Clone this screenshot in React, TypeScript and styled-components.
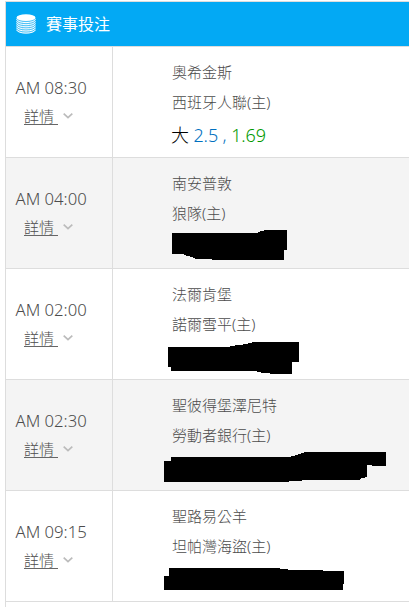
import React from "react";
import styled, { createGlobalStyle } from "styled-components";

const GlobalStyle = createGlobalStyle`
  * { box-sizing: border-box; }
  body {
    margin: 0;
    background: #fff;
    color: #4c4c4c;
    font-family: "Noto Sans", "Noto Sans CJK TC", sans-serif;
    overflow: hidden;
  }
`;

const Panel = styled.main`
  height: 607px;
  margin-left: 5px;
  padding-top: 1px;
  display: flex;
  flex-direction: column;
`;

const Table = styled.section`
  flex: 1;
  border-left: 1px solid #ddd;
  border-top: 1px solid #ddd;
`;

const Header = styled.header`
  height: 45px;
  display: flex;
  align-items: center;
  gap: 10px;
  padding-left: 10px;
  background: #03a9f4;
  border-bottom: 1px solid #ddd;
`;

const Title = styled.h1`
  margin: 0;
  color: #fff;
  font-size: 16px;
  line-height: 24px;
  font-weight: 400;
`;

const Row = styled.article<{ $shaded: boolean }>`
  height: 111px;
  display: grid;
  grid-template-columns: 107px 1fr;
  background: ${(p) => (p.$shaded ? "#f4f4f4" : "#fff")};
  border-bottom: 1px solid #ddd;
`;

const TimeCell = styled.div`
  border-right: 1px solid #ddd;
  padding: 27px 0 0 9.5px;
`;

const Time = styled.div`
  font-size: 16.7px;
  line-height: 28px;
  font-weight: 300;
  white-space: nowrap;
`;

const Details = styled.div`
  display: flex;
  align-items: center;
  gap: 5px;
  height: 28px;
  padding-left: 8.5px;
`;

const DetailsLink = styled.a`
  width: 34px;
  height: 18px;
  font-size: 15px;
  line-height: 18px;
  font-weight: 300;
  border-bottom: 1px solid #666;
`;

const MatchCell = styled.div`
  padding: 10px 0 0 59px;
  overflow: hidden;
`;

const Team = styled.div`
  font-size: 15px;
  line-height: 30px;
  font-weight: 300;
  white-space: nowrap;
`;

const Odds = styled.div`
  margin-left: -1px;
  font-size: 18px;
  line-height: 37px;
  letter-spacing: -0.12px;
  font-weight: 300;
  color: #000;
  white-space: nowrap;
`;

const Line = styled.span`
  color: #0070c0;
`;

const Price = styled.span`
  color: #009900;
`;

const Redaction = styled.svg`
  display: block;
  margin-left: -8px;
`;

const CoinsIcon = () => (
  <svg width="20" height="20" viewBox="0 0 20 20" fill="none">
    <ellipse cx="10" cy="3.7" rx="9.5" ry="3.4" fill="#fff" />
    <path d="M0.5 3.7V16C2 20.6 18 20.6 19.5 16V3.7" fill="#fff" fillOpacity=".3" />
    {[5.3, 7.4, 9.5, 11.6, 13.7, 15.8].map((y) => (
      <path key={y} d={`M.5 ${y}C2 ${y + 4.4} 18 ${y + 4.4} 19.5 ${y}`} stroke="#fff" strokeWidth="1" />
    ))}
  </svg>
);

const Chevron = () => (
  <svg width="10" height="6" viewBox="0 0 10 6" fill="none">
    <path d="M.7 .7L5 4.7L9.3 .7" stroke="#bbb" strokeWidth="1.7" />
  </svg>
);

interface Match {
  time: string;
  away: string;
  home: string;
  odds?: { side: string; line: string; price: string };
  mask?: string;
}

const matches: Match[] = [
  { time: "AM 08:30", away: "奧希金斯", home: "西班牙人聯(主)", odds: { side: "大", line: "2.5", price: "1.69" } },
  {
    time: "AM 04:00", away: "南安普敦", home: "狼隊(主)",
    mask: "M8 5H94V4H96V3H100V2H123V22H120V32H48V31H31V30H29V29H26V28H22V27H20V26H8Z",
  },
  {
    time: "AM 02:00", away: "法爾肯堡", home: "諾爾雪平(主)",
    mask: "M4 8H66V7H71V6H79V5H84V4H88V3H135V23H128V35H106V34H97V33H93V32H7V28H4Z",
  },
  {
    time: "AM 02:30", away: "聖彼得堡澤尼特", home: "勞動者銀行(主)",
    mask: "M7 7H127V6H131V5H134V4H137V3H140V2H222V16H208V15H203V27H201V28H197V29H196V30H138V31H125V32H0V11H7Z",
  },
  {
    time: "AM 09:15", away: "聖路易公羊", home: "坦帕灣海盜(主)",
    mask: "M5 7H116V8H124V9H159V10H180V23H179V29H0V15H5Z",
  },
];

const MatchRow = ({ match, shaded }: { match: Match; shaded: boolean }) => (
  <Row $shaded={shaded}>
    <TimeCell>
      <Time>{match.time}</Time>
      <Details>
        <DetailsLink>詳情</DetailsLink>
        <Chevron />
      </Details>
    </TimeCell>
    <MatchCell>
      <Team>{match.away}</Team>
      <Team>{match.home}</Team>
      {match.odds && (
        <Odds>
          {match.odds.side} <Line>{match.odds.line} , </Line>
          <Price>{match.odds.price}</Price>
        </Odds>
      )}
      {match.mask && (
        <Redaction width="226" height="38" viewBox="0 0 226 38" shapeRendering="crispEdges">
          <path d={match.mask} fill="#000" />
        </Redaction>
      )}
    </MatchCell>
  </Row>
);

export default function App() {
  return (
    <>
      <GlobalStyle />
      <Panel>
        <Table>
          <Header>
            <CoinsIcon />
            <Title>賽事投注</Title>
          </Header>
          {matches.map((match, i) => (
            <MatchRow key={match.time} match={match} shaded={i % 2 === 1} />
          ))}
        </Table>
      </Panel>
    </>
  );
}
